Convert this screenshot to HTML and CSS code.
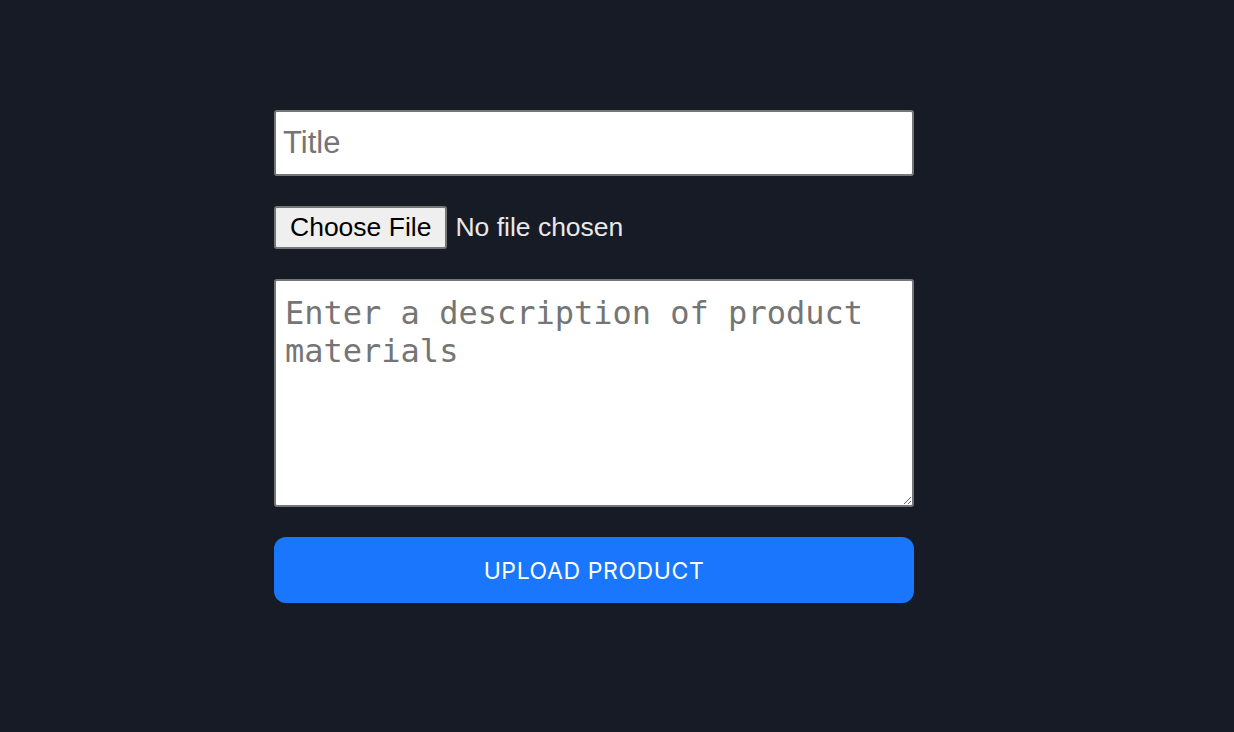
FILE: index.html
```html
<!DOCTYPE html>
<html lang="en">
<head>
<meta charset="utf-8">
<title>Upload Product</title>
<link rel="stylesheet" href="styles.css">
</head>
<body>
<main class="page">
  <form class="upload-form">
    <input class="field title-field" type="text" placeholder="Title">
    <input class="file-field" type="file">
    <textarea class="field desc-field" placeholder="Enter a description of product materials"></textarea>
    <button class="submit-btn" type="button">UPLOAD PRODUCT</button>
  </form>
</main>
</body>
</html>
```

FILE: styles.css
```css
html, body {
  margin: 0;
  padding: 0;
  background: #171b26;
  height: 100%;
}

.page {
  display: flex;
  justify-content: flex-start;
  padding: 110px 0 0 274px;
  font-family: "Liberation Sans", Arial, sans-serif;
}

.upload-form {
  width: 640px;
  display: flex;
  flex-direction: column;
  gap: 30px;
}

.field {
  box-sizing: border-box;
  width: 100%;
  background: #ffffff;
  border: 2px solid #767676;
  border-radius: 3px;
  color: #000;
  margin: 0;
  outline: none;
}

.title-field {
  height: 66px;
  padding: 0 7px;
  font-family: "Liberation Sans", Arial, sans-serif;
  font-size: 31px;
}

.title-field::placeholder {
  color: #757575;
}

.file-field {
  font-family: "Liberation Sans", Arial, sans-serif;
  font-size: 26.5px;
  color: #e8e8e8;
  margin: 0;
  height: 43px;
}

.file-field::file-selector-button {
  font-family: "Liberation Sans", Arial, sans-serif;
  font-size: 26.5px;
  background: #efefef;
  color: #000;
  border: 2px solid #767676;
  border-radius: 3px;
  padding: 3px 14px;
  margin-right: 8px;
  height: 43px;
}

.desc-field {
  height: 228px;
  padding: 13px 9px;
  font-family: "DejaVu Sans Mono", monospace;
  font-size: 32px;
  line-height: 38px;
  resize: vertical;
}

.desc-field::placeholder {
  color: #757575;
}

.submit-btn {
  height: 66px;
  width: 100%;
  border: none;
  border-radius: 12px;
  background: #1a77fd;
  color: #ffffff;
  font-family: Inter, "Noto Sans", sans-serif;
  font-size: 23px;
  font-weight: 400;
  letter-spacing: 0.6px;
  padding: 2px 0 0;
  cursor: pointer;
}
```
